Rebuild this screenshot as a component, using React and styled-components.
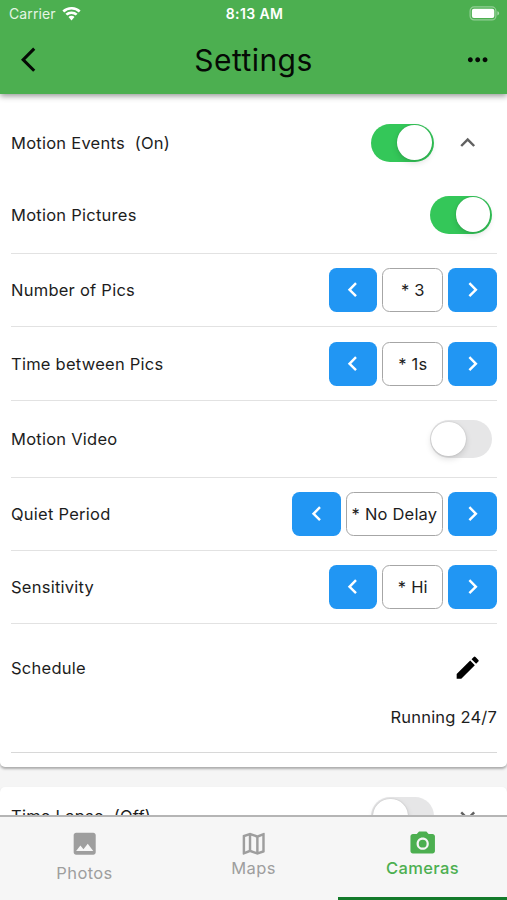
import React from "react";
import styled, { createGlobalStyle, css } from "styled-components";
import {
  MdArrowBackIos,
  MdMoreHoriz,
  MdExpandLess,
  MdExpandMore,
  MdChevronLeft,
  MdChevronRight,
  MdEdit,
  MdPhoto,
  MdOutlineMap,
  MdPhotoCamera,
} from "react-icons/md";

const GlobalStyle = createGlobalStyle`
  * { box-sizing: border-box; }
  body {
    margin: 0;
    font-family: Inter, "Liberation Sans", sans-serif;
    color: #1d1d1d;
    overflow: hidden;
  }
  button { font: inherit; border: 0; padding: 0; background: none; color: inherit; }
  svg { display: block; }
`;

const ICON = "29.4px";

const Screen = styled.div`
  width: 507px;
  height: 900px;
  display: flex;
  flex-direction: column;
  background: #f5f5f5;
  overflow: hidden;
`;

const Header = styled.header`
  flex: none;
  height: 94px;
  background: #4caf50;
  box-shadow: 0 2px 6px rgba(0, 0, 0, 0.42);
  z-index: 1;
`;

const StatusBar = styled.div`
  height: 26px;
  padding: 1px 7px 0 9px;
  display: grid;
  grid-template-columns: 1fr auto 1fr;
  align-items: center;
  color: #fff;
  font-size: 14px;
`;

const Carrier = styled.div`
  display: flex;
  align-items: center;
  gap: 6px;
  color: #e4f5e4;
  letter-spacing: 0.1px;
`;

const Clock = styled.div`
  font-weight: 600;
  font-size: 14px;
  letter-spacing: 0.4px;
`;

const Battery = styled.svg`
  justify-self: end;
`;

const TitleBar = styled.div`
  height: 68px;
  display: grid;
  grid-template-columns: 60px 1fr 60px;
  align-items: center;
  color: #050a05;
`;

const BackButton = styled.button`
  padding-left: 21px;
`;

const MoreButton = styled.button`
  justify-self: end;
  padding-right: 14.5px;
`;

const Title = styled.h1`
  margin: 0;
  text-align: center;
  font-size: 30px;
  line-height: 36px;
  font-weight: 400;
  letter-spacing: 0.45px;
`;

const Content = styled.main`
  flex: 1;
  min-height: 0;
  overflow: hidden;
`;

const Card = styled.section`
  background: #fff;
  border-radius: ${(p) => (p.$first ? "0 0 5px 5px" : "5px")};
  padding: ${(p) => (p.$first ? "15px 0 14px" : "0")};
  margin-bottom: 20px;
  box-shadow: 0 2px 2.5px rgba(0, 0, 0, 0.3);
`;

const CardHead = styled.div`
  height: ${(p) => p.$height}px;
  display: flex;
  align-items: center;
  padding: 0 24.3px 0 11px;
  gap: 19.6px;
  color: #616161;
`;

const Label = styled.span`
  flex: 1;
  white-space: pre;
  color: #1d1d1d;
  font-size: 16.5px;
  line-height: 20px;
  letter-spacing: 0.25px;
`;

const Row = styled.div`
  height: ${(p) => p.$height}px;
  margin: 0 10px 0 11px;
  display: flex;
  align-items: center;
  border-bottom: 1.5px solid #e2e2e2;
`;

const Track = styled.span`
  flex: none;
  width: 62.4px;
  height: 38px;
  padding: 1.7px;
  border-radius: 19px;
  display: flex;
  justify-content: ${(p) => (p.$on ? "flex-end" : "flex-start")};
  background: ${(p) => (p.$on ? "#34c759" : "#e6e6e7")};
  ${(p) => p.$inset && css`margin-right: 5px;`}
`;

const Thumb = styled.span`
  width: 34.6px;
  height: 34.6px;
  border-radius: 50%;
  background: #fff;
  box-shadow: 0 3px 6px rgba(0, 0, 0, 0.13), 0 0 1.5px rgba(0, 0, 0, 0.2);
`;

const StepperBox = styled.div`
  display: flex;
  gap: 5px;
`;

const StepButton = styled.button`
  width: 48.7px;
  height: 44px;
  display: flex;
  align-items: center;
  justify-content: center;
  border-radius: 7.5px;
  background: #2196f3;
  color: #fff;
`;

const StepValue = styled.span`
  min-width: 61px;
  height: 44px;
  padding: 0 5px;
  display: flex;
  align-items: center;
  justify-content: center;
  border: 1.5px solid #a6a6a6;
  border-radius: 7.5px;
  white-space: pre;
  font-size: 16.5px;
  letter-spacing: 0.2px;
`;

const Schedule = styled.div`
  height: 128.6px;
  margin: 0 10px 0 11px;
  padding-top: 19.6px;
  border-bottom: 1px solid #d8d8d8;
`;

const ScheduleHead = styled.div`
  height: 48px;
  display: flex;
  align-items: center;
  padding-right: 14.5px;
  color: #000;
`;

const ScheduleStatus = styled.div`
  margin-top: 15px;
  text-align: right;
  font-size: 16.5px;
  line-height: 20px;
  letter-spacing: 0.2px;
`;

const TabBar = styled.nav`
  flex: none;
  height: 85px;
  display: grid;
  grid-template-columns: repeat(3, 1fr);
  background: #f6f6f6;
  border-top: 2px solid #b5b5b5;
  z-index: 1;
`;

const Tab = styled.button`
  display: flex;
  flex-direction: column;
  align-items: center;
  padding-top: 12px;
  gap: ${(p) => p.$gap}px;
  color: ${(p) => (p.$active ? "#4caf50" : "#9e9e9e")};
  border-bottom: 3px solid ${(p) => (p.$active ? "#137a2a" : "transparent")};
`;

const TabLabel = styled.span`
  font-size: 16.5px;
  line-height: 20px;
  font-weight: ${(p) => p.$weight};
  letter-spacing: 0.4px;
`;

function Toggle({ on, inset }) {
  return (
    <Track role="switch" aria-checked={!!on} $on={on} $inset={inset}>
      <Thumb />
    </Track>
  );
}

function Stepper({ value }) {
  return (
    <StepperBox>
      <StepButton aria-label="Previous"><MdChevronLeft size={ICON} /></StepButton>
      <StepValue>{value}</StepValue>
      <StepButton aria-label="Next"><MdChevronRight size={ICON} /></StepButton>
    </StepperBox>
  );
}

const rows = [
  { label: "Motion Pictures", height: 78, toggle: true, on: true },
  { label: "Number of Pics", height: 73, value: "* 3" },
  { label: "Time between Pics", height: 74, value: "* 1s" },
  { label: "Motion Video", height: 77, toggle: true, on: false },
  { label: "Quiet Period", height: 73, value: "* No Delay" },
  { label: "Sensitivity", height: 73.4, value: "* Hi" },
];

const tabs = [
  { label: "Photos", Icon: MdPhoto, gap: 5, weight: 400 },
  { label: "Maps", Icon: MdOutlineMap, gap: 0, weight: 400 },
  { label: "Cameras", Icon: MdPhotoCamera, gap: 0, weight: 500, active: true },
];

export default function App() {
  return (
    <>
      <GlobalStyle />
      <Screen>
        <Header>
          <StatusBar>
            <Carrier>
              Carrier
              <svg width="19" height="14" viewBox="0 0 19 14" fill="#fff">
                <path d="M9.5 0C5.900 0 2.700 1.300.400 3.500L2.200 5.400a10.600 10.600 0 0 1 14.600 0l1.800-1.900A13 13 0 0 0 9.500 0Z" />
                <path d="M9.500 4.400A8.700 8.700 0 0 0 3.400 6.700l1.900 1.900a6.200 6.200 0 0 1 8.400 0l1.900-1.900a8.700 8.700 0 0 0-6.100-2.300Z" />
                <path d="M9.500 8.700a4.200 4.200 0 0 0-3 1.200l3 3.600 3-3.600a4.200 4.200 0 0 0-3-1.200Z" />
              </svg>
            </Carrier>
            <Clock>8:13 AM</Clock>
            <Battery width="31" height="15" viewBox="0 0 31 15">
              <rect x="1.100" y="0.900" width="25.800" height="13" rx="4" fill="none" stroke="#fff" strokeOpacity="0.4" strokeWidth="1.200" />
              <rect x="2.900" y="2.700" width="22.400" height="9.400" rx="2" fill="#fff" />
              <path d="M28.400 5.200v4.200c1.100-.4 1.700-1.200 1.700-2.100s-.6-1.700-1.700-2.100Z" fill="#fff" fillOpacity="0.5" />
            </Battery>
          </StatusBar>
          <TitleBar>
            <BackButton aria-label="Back"><MdArrowBackIos size={ICON} /></BackButton>
            <Title>Settings</Title>
            <MoreButton aria-label="More"><MdMoreHoriz size={ICON} /></MoreButton>
          </TitleBar>
        </Header>

        <Content>
          <Card $first>
            <CardHead $height={67}>
              <Label>{"Motion Events  (On)"}</Label>
              <Toggle on />
              <MdExpandLess size={ICON} />
            </CardHead>
            {rows.map((r) => (
              <Row key={r.label} $height={r.height}>
                <Label>{r.label}</Label>
                {r.toggle ? <Toggle on={r.on} inset /> : <Stepper value={r.value} />}
              </Row>
            ))}
            <Schedule>
              <ScheduleHead>
                <Label>Schedule</Label>
                <MdEdit size={ICON} />
              </ScheduleHead>
              <ScheduleStatus>Running 24/7</ScheduleStatus>
            </Schedule>
          </Card>
          <Card>
            <CardHead $height={58}>
              <Label>{"Time Lapse  (Off)"}</Label>
              <Toggle />
              <MdExpandMore size={ICON} />
            </CardHead>
          </Card>
        </Content>

        <TabBar>
          {tabs.map(({ label, Icon, gap, weight, active }) => (
            <Tab key={label} $gap={gap} $active={active}>
              <Icon size={ICON} />
              <TabLabel $weight={weight}>{label}</TabLabel>
            </Tab>
          ))}
        </TabBar>
      </Screen>
    </>
  );
}
